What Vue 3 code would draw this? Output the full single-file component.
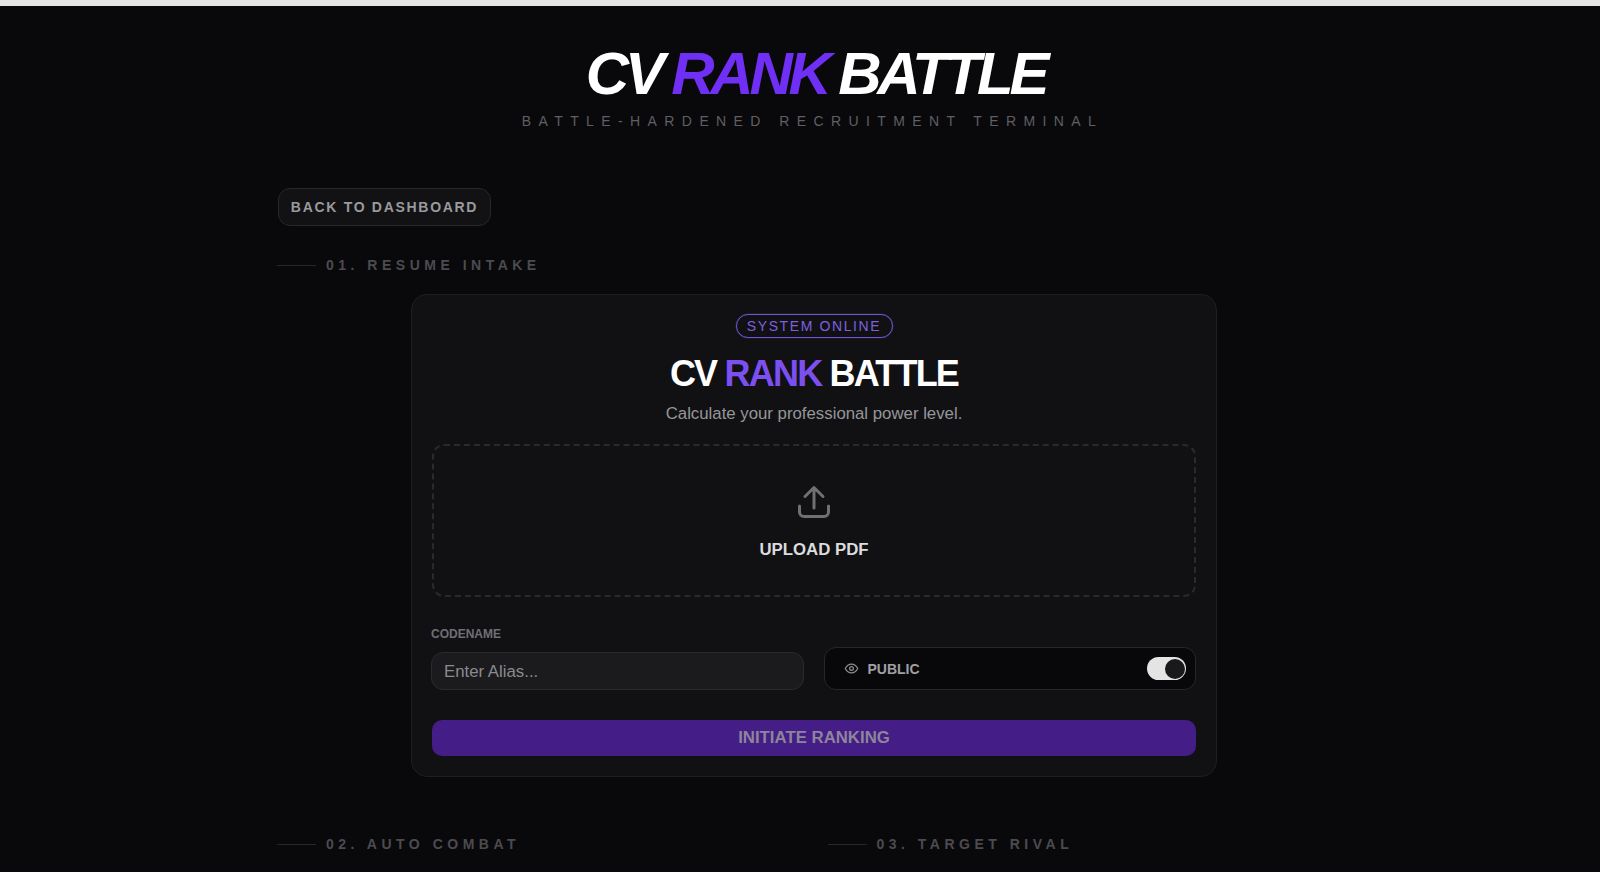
<script setup>
const sections = ['02. AUTO COMBAT', '03. TARGET RIVAL']
</script>

<template>
  <div class="page">
    <div class="topbar"></div>
    <header class="hero">
      <h1 class="hero-title">CV <span>RANK</span> BATTLE</h1>
      <p class="hero-sub">BATTLE-HARDENED RECRUITMENT TERMINAL</p>
    </header>
    <main class="wrap">
      <button class="back">BACK TO DASHBOARD</button>
      <div class="sec first"><i></i><span>01. RESUME INTAKE</span></div>
      <section class="card">
        <div class="badge-row"><span class="badge">SYSTEM ONLINE</span></div>
        <h2 class="card-title">CV <span>RANK</span> BATTLE</h2>
        <p class="card-sub">Calculate your professional power level.</p>
        <div class="drop">
          <svg class="upload" viewBox="0 0 32 32" fill="none" stroke="currentColor" stroke-width="3" stroke-linecap="round" stroke-linejoin="round">
            <path d="M16 22V1.5M7 10.5l9-9 9 9" />
            <path d="M1.5 20v6A4.5 4.5 0 0 0 6 30.5h20a4.5 4.5 0 0 0 4.5-4.5v-6" />
          </svg>
          <div class="drop-text">UPLOAD PDF</div>
        </div>
        <div class="fields">
          <div class="field">
            <label class="label" for="alias">CODENAME</label>
            <input id="alias" class="input" placeholder="Enter Alias..." />
          </div>
          <div class="public">
            <svg class="eye" viewBox="0 0 24 24" fill="none" stroke="currentColor" stroke-width="2" stroke-linecap="round" stroke-linejoin="round">
              <path d="M2 12s3.6-7 10-7 10 7 10 7-3.6 7-10 7-10-7-10-7Z" />
              <circle cx="12" cy="12" r="3" />
            </svg>
            <span class="public-text">PUBLIC</span>
            <span class="toggle"><b></b></span>
          </div>
        </div>
        <button class="cta">INITIATE RANKING</button>
      </section>
      <div class="grid">
        <div v-for="s in sections" :key="s" class="sec"><i></i><span>{{ s }}</span></div>
      </div>
    </main>
  </div>
</template>

<style>
html, body { margin: 0; background: #09090c; }
</style>

<style scoped>
.page {
  height: 872px;
  overflow: hidden;
  background: #09090c;
  font-family: "Liberation Sans", Arial, sans-serif;
}
.topbar { height: 6px; background: #e6e6e4; }
.hero { margin-left: 25px; text-align: center; padding-top: 34px; }
.hero-title {
  margin: 0;
  padding-left: 6px;
  font-size: 60px;
  line-height: 68px;
  font-weight: 700;
  font-style: italic;
  letter-spacing: -4.2px;
  word-spacing: -2px;
  color: #fff;
}
.hero-title span { color: #702ff5; }
.hero-sub {
  margin: 3px 0 0;
  font-size: 14px;
  line-height: 20px;
  letter-spacing: 7.4px;
  color: #5f5f64;
}
.wrap { width: 1074px; margin-left: 277px; padding-top: 57px; }
.back {
  display: block;
  width: 213px;
  height: 38px;
  margin-left: 1px;
  padding: 0;
  border: 1px solid #27272a;
  border-radius: 12px;
  background: #121214;
  color: #9a9a9e;
  font: 700 14px "Liberation Sans", Arial, sans-serif;
  letter-spacing: 1.7px;
}
.sec { display: flex; align-items: center; gap: 10px; height: 20px; }
.sec i { width: 39px; height: 1px; background: #27272a; }
.sec span {
  font-size: 14px;
  font-weight: 700;
  letter-spacing: 4.5px;
  color: #4b4b50;
}
.first { margin-top: 29px; }
.card {
  box-sizing: border-box;
  width: 806px;
  height: 483px;
  margin: 19px auto 0;
  padding: 19px 20px 20px;
  border: 1px solid #1f1f22;
  border-radius: 16px;
  background: #111113;
}
.badge-row { display: flex; justify-content: center; }
.badge {
  box-sizing: border-box;
  width: 157px;
  height: 24px;
  border: 1px solid #7355d6;
  box-shadow: 0 0 1px #7355d6;
  border-radius: 12px;
  color: #7d60e0;
  font-size: 14px;
  line-height: 22px;
  letter-spacing: 1.6px;
  text-align: center;
}
.card-title {
  margin: 16px 0 0;
  text-align: center;
  font-size: 36px;
  line-height: 40px;
  font-weight: 700;
  letter-spacing: -1.8px;
  color: #fff;
}
.card-title span { color: #7c4ff0; }
.card-sub {
  margin: 10px 0 0;
  text-align: center;
  font-size: 16.8px;
  line-height: 20px;
  color: #96969a;
}
.drop {
  box-sizing: border-box;
  height: 153px;
  margin-top: 20px;
  padding-top: 40px;
  border: 2px dashed #2a2a2d;
  border-radius: 12px;
  text-align: center;
}
.upload { display: block; width: 32px; height: 32px; margin: 0 auto; color: #6f6f74; overflow: visible; }
.drop-text { margin-top: 22px; font-size: 16.8px; line-height: 20px; font-weight: 700; color: #dcdcde; }
.fields { display: grid; grid-template-columns: 1fr 1fr; gap: 20px; margin: 29px 0 0 -1px; align-items: end; }
.field { display: flex; flex-direction: column; }
.label { font-size: 12px; font-weight: 700; line-height: 16px; color: #6f6f74; margin-bottom: 10px; }
.input {
  box-sizing: border-box;
  width: 100%;
  height: 38px;
  padding: 2px 12px 0;
  border: 1px solid #2a2a2d;
  border-radius: 12px;
  background: #1b1b1e;
  color: #ddd;
  font: 16.8px "Liberation Sans", Arial, sans-serif;
  outline: none;
}
.input::placeholder { color: #8a8a8e; opacity: 1; }
.public {
  box-sizing: border-box;
  display: flex;
  align-items: center;
  height: 43px;
  padding: 0 9px 0 19px;
  border: 1px solid #27272a;
  border-radius: 12px;
  background: #08080a;
}
.eye { width: 15px; height: 15px; color: #8d8d92; }
.public-text { margin-left: 9px; font-size: 14px; font-weight: 700; color: #a0a0a4; }
.toggle {
  box-sizing: border-box;
  display: flex;
  justify-content: flex-end;
  align-items: center;
  width: 39px;
  height: 23px;
  margin-left: auto;
  padding: 1px;
  border-radius: 12px;
  background: #e4e4e4;
}
.toggle b { width: 20px; height: 20px; border-radius: 50%; background: #19191b; }
.cta {
  display: block;
  width: 100%;
  height: 36px;
  margin-top: 30px;
  padding: 0;
  border: 0;
  border-radius: 10px;
  background: #441d86;
  color: #8e849b;
  font: 700 16.8px "Liberation Sans", Arial, sans-serif;
}
.grid { display: grid; grid-template-columns: 1fr 1fr; gap: 27px; margin-top: 57px; }
</style>
